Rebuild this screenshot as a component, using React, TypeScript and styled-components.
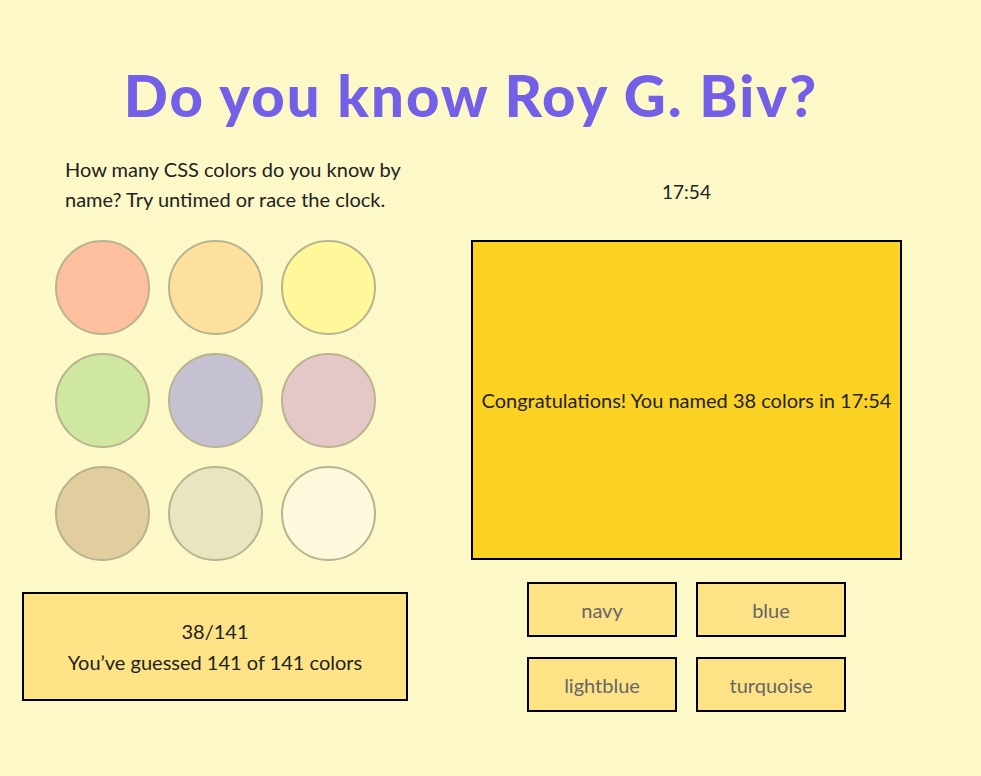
import React from "react";
import styled, { createGlobalStyle } from "styled-components";

const Global = createGlobalStyle`
  html, body { margin: 0; padding: 0; background: #fdf8c8; }
  body { font-family: "Lato", "Open Sans", sans-serif; color: #222; }
`;

const Page = styled.div`
  width: 898px;
  margin-left: 22px;
  padding-top: 59px;
`;

const Title = styled.h1`
  margin: 0;
  text-align: center;
  font-family: "Lato", sans-serif;
  font-weight: 900;
  font-size: 58px;
  line-height: 72px;
  letter-spacing: 2px;
  color: #735fe8;
`;

const Columns = styled.div`
  display: grid;
  grid-template-columns: 449px 431px;
  margin-top: 23px;
`;

const LeftCol = styled.div`
  display: flex;
  flex-direction: column;
`;

const Intro = styled.p`
  margin: 0;
  padding-left: 43px;
  width: 370px;
  font-size: 20px;
  line-height: 30px;
`;

const Swatches = styled.div`
  display: grid;
  grid-template-columns: repeat(3, 95px);
  gap: 18px;
  margin: 26px 0 0 33px;
`;

const Swatch = styled.div<{ $c: string }>`
  width: 95px;
  height: 95px;
  box-sizing: border-box;
  border-radius: 50%;
  border: 2px solid #b9b48f;
  background: ${(p) => p.$c};
`;

const Score = styled.div`
  margin-top: 31px;
  width: 386px;
  height: 109px;
  box-sizing: border-box;
  border: 2px solid #000;
  background: #fde386;
  display: flex;
  flex-direction: column;
  align-items: center;
  justify-content: center;
  font-size: 20px;
  line-height: 31px;
`;

const RightCol = styled.div`
  display: flex;
  flex-direction: column;
  align-items: center;
`;

const Timer = styled.div`
  margin-top: 24px;
  font-size: 19px;
  line-height: 28px;
`;

const Result = styled.div`
  margin-top: 34px;
  width: 431px;
  height: 320px;
  box-sizing: border-box;
  border: 2px solid #000;
  background: #fbd224;
  display: flex;
  align-items: center;
  justify-content: center;
  font-size: 20px;
  white-space: nowrap;
`;

const Choices = styled.div`
  margin-top: 22px;
  display: grid;
  grid-template-columns: repeat(2, 150px);
  column-gap: 19px;
  row-gap: 20px;
`;

const Choice = styled.button`
  width: 150px;
  height: 55px;
  box-sizing: border-box;
  border: 2px solid #000;
  background: #fde386;
  font-family: inherit;
  font-size: 20px;
  color: #666;
  padding: 0;
  cursor: pointer;
`;

const colors = [
  "#fdbf9d",
  "#fde09b",
  "#fef89b",
  "#cfe7a1",
  "#c5c1d2",
  "#e5c7c8",
  "#e2cd9f",
  "#e8e5c1",
  "#fef9dc",
];

export default function App() {
  return (
    <>
      <Global />
      <Page>
        <Title>Do you know Roy G. Biv?</Title>
        <Columns>
          <LeftCol>
            <Intro>
              How many CSS colors do you know by name? Try untimed or race the clock.
            </Intro>
            <Swatches>
              {colors.map((c) => (
                <Swatch key={c} $c={c} />
              ))}
            </Swatches>
            <Score>
              <div>38/141</div>
              <div>You’ve guessed 141 of 141 colors</div>
            </Score>
          </LeftCol>
          <RightCol>
            <Timer>17:54</Timer>
            <Result>Congratulations! You named 38 colors in 17:54</Result>
            <Choices>
              <Choice>navy</Choice>
              <Choice>blue</Choice>
              <Choice>lightblue</Choice>
              <Choice>turquoise</Choice>
            </Choices>
          </RightCol>
        </Columns>
      </Page>
    </>
  );
}
